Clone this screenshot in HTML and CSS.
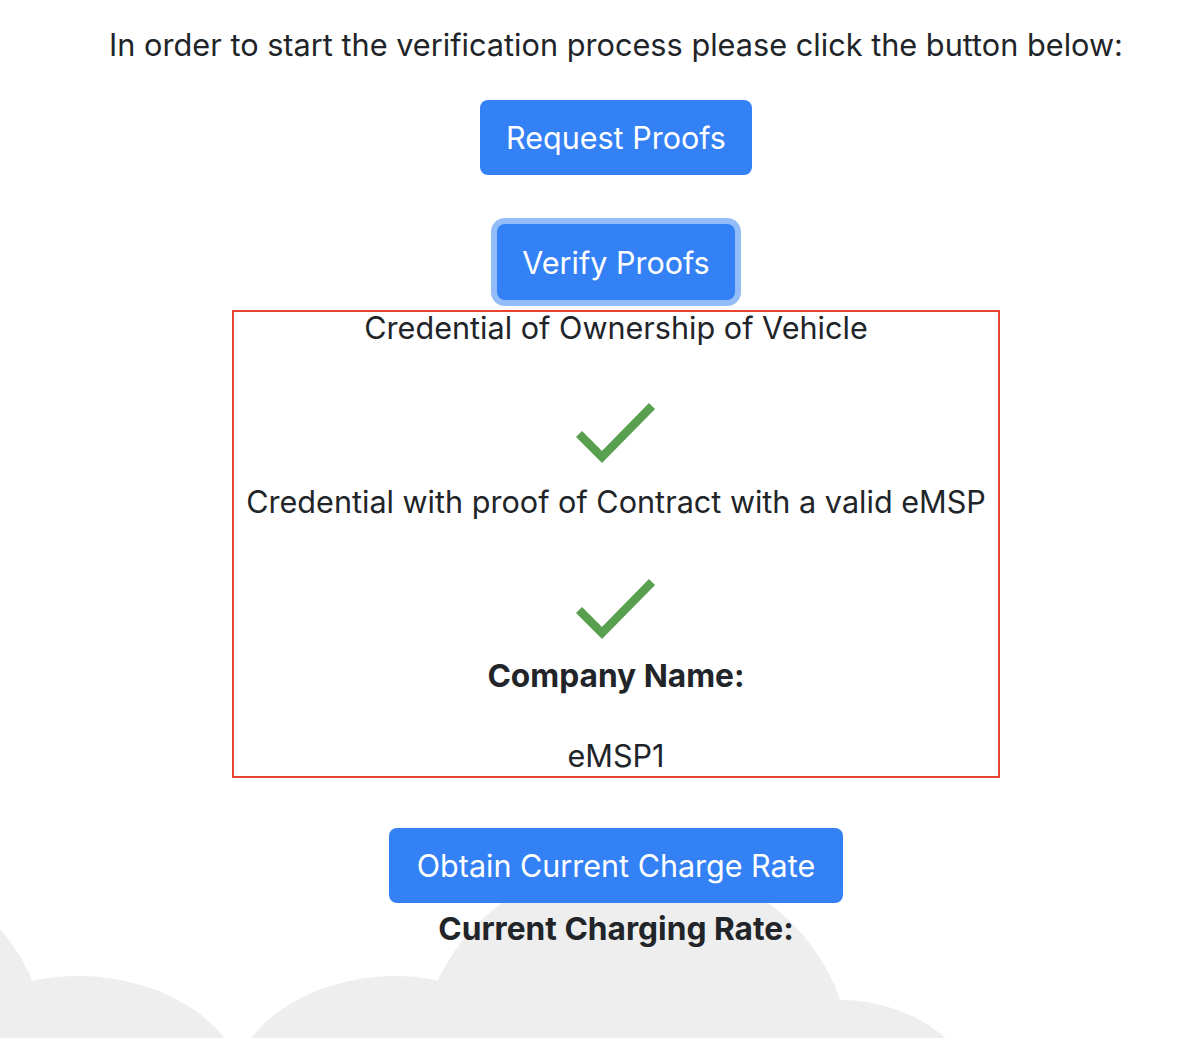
FILE: index.html
```html
<!DOCTYPE html>
<html lang="en">
<head>
<meta charset="utf-8">
<title>Verification</title>
<link rel="stylesheet" href="styles.css">
</head>
<body>
<svg class="clouds" viewBox="0 838 1186 200" preserveAspectRatio="none" aria-hidden="true">
  <ellipse cx="-60" cy="1100" rx="115" ry="200"/>
  <ellipse cx="78" cy="1100" rx="169" ry="124"/>
  <ellipse cx="395" cy="1100" rx="166" ry="124"/>
  <ellipse cx="635" cy="1060" rx="215" ry="200"/>
  <ellipse cx="840" cy="1120" rx="145" ry="120"/>
</svg>
<main class="page">
  <p class="intro">In order to start the verification process please click the button below:</p>
  <button class="btn request">Request Proofs</button>
  <button class="btn verify">Verify Proofs</button>
  <section class="result">
    <p class="line first">Credential of Ownership of Vehicle</p>
    <svg class="check check-one" viewBox="0 0 80 64"><polyline points="3,34 26,57 76,6"/></svg>
    <p class="line second">Credential with proof of Contract with a valid eMSP</p>
    <svg class="check check-two" viewBox="0 0 80 64"><polyline points="3,34 26,57 76,6"/></svg>
    <p class="line label">Company Name:</p>
    <p class="line company">eMSP1</p>
  </section>
  <button class="btn obtain">Obtain Current Charge Rate</button>
  <p class="line rate">Current Charging Rate:</p>
</main>
</body>
</html>
```
FILE: styles.css
```css
html, body {
  margin: 0;
  padding: 0;
}
body {
  position: relative;
  min-height: 1038px;
  overflow: hidden;
  background: #ffffff;
  color: #212529;
  font-family: Inter, "Noto Sans", sans-serif;
}
.clouds {
  position: absolute;
  left: 0;
  bottom: 0;
  width: 1186px;
  height: 200px;
  fill: #eeeeee;
  z-index: 0;
}
.page {
  position: relative;
  z-index: 1;
  display: flex;
  flex-direction: column;
  align-items: center;
  padding-left: 46px;
}
.intro {
  margin: 22px 0 0;
  font-size: 30.7px;
  line-height: 45px;
  white-space: nowrap;
}
.btn {
  font-family: Inter, "Noto Sans", sans-serif;
  font-size: 30.5px;
  color: #ffffff;
  background: #3381f5;
  border: none;
  border-radius: 8px;
  height: 75px;
  padding: 0 26px;
}
.request {
  margin-top: 33px;
}
.verify {
  margin-top: 49px;
  height: 76px;
  padding: 0 25px;
  box-shadow: 0 0 0 6px #93bdf8;
}
.result {
  margin-top: 10px;
  width: 768px;
  height: 468px;
  box-sizing: border-box;
  border: 2px solid #e8432c;
  display: flex;
  flex-direction: column;
  align-items: center;
}
.line {
  margin: 0;
  font-size: 30.6px;
  line-height: 32px;
  white-space: nowrap;
}
.check {
  width: 80px;
  height: 64px;
  fill: none;
  stroke: #589f4f;
  stroke-width: 8.5;
  stroke-linecap: butt;
  stroke-linejoin: miter;
  filter: blur(0.5px);
}
.check-one {
  margin-top: 56px;
}
.second {
  margin-top: 22px;
}
.check-two {
  margin-top: 58px;
}
.label {
  margin-top: 20px;
  font-size: 31.7px;
  font-weight: 700;
}
.company {
  margin-top: 48px;
}
.obtain {
  margin-top: 50px;
  padding: 0 28px;
}
.rate {
  margin-top: 10px;
  font-size: 31.7px;
  font-weight: 700;
}
```
